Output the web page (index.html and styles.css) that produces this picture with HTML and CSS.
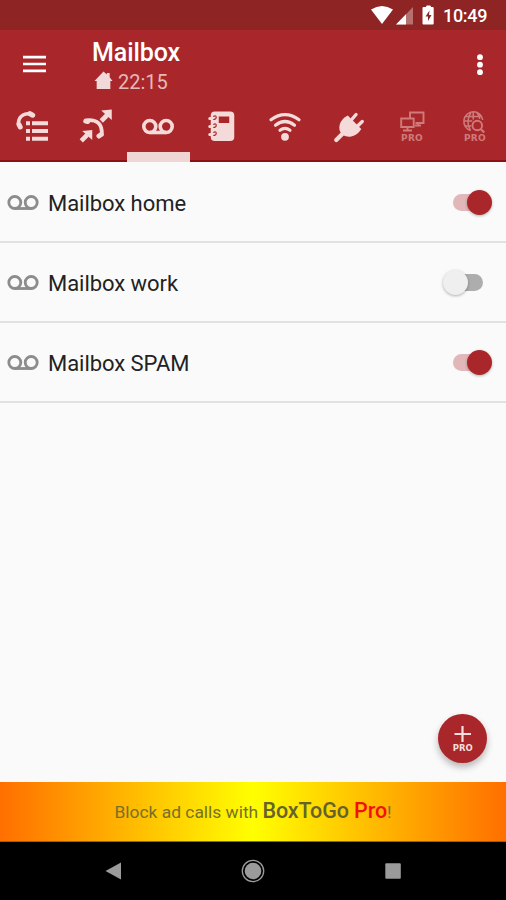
FILE: index.html
```html
<!DOCTYPE html>
<html lang="en">
<head>
<meta charset="utf-8">
<title>Mailbox</title>
<link rel="stylesheet" href="styles.css">
</head>
<body>
<svg class="defs" width="0" height="0" aria-hidden="true">
  <symbol id="voicemail" viewBox="0 0 34 18">
    <g fill="none" stroke="currentColor"><circle cx="8.800" cy="8.500" r="6"/><circle cx="25.200" cy="8.500" r="6"/><path d="M8.800 14.500h16.400"/></g>
  </symbol>
</svg>
<div class="screen">
  <header class="status">
    <svg class="status-icons" viewBox="370 0 66 30" fill="#fff">
      <path d="M371 9.5q11-7 22 0L382 24z"/>
      <path opacity=".35" d="M413 7v17.500h-17z"/><path d="M406 14.200v10.300h-10z"/>
      <path d="M424.500 7h1.500q0-1.500 1-1.500h3q1 0 1 1.500h1.700q1 0 1 1v15.500q0 1-1 1h-9.200q-1 0-1-1v-15.500q0-1 1-1z"/>
      <path fill="#8e2424" d="M429.500 10.500l-4 6h2.500v4.500l3.500-6h-2.500z"/>
    </svg>
    <span class="clock">10:49</span>
  </header>
  <div class="appbar">
    <svg class="menu" viewBox="0 0 24 18"><path d="M0 1.800h24M0 9h24M0 16.200h24" stroke="#fff" stroke-width="2.800"/></svg>
    <div class="heading">
      <h1>Mailbox</h1>
      <div class="sub"><svg viewBox="0 0 20 20"><path d="M10 .5l3.500 3.300V2h3v4.500L19.500 10.500h-2.300V19H2.800v-8.500H.500z" fill="#f2d9d9"/></svg><span>22:15</span></div>
    </div>
    <svg class="more" viewBox="0 0 8 22" fill="#fff"><circle cx="4" cy="3.200" r="2.900"/><circle cx="4" cy="10.700" r="2.900"/><circle cx="4" cy="18.200" r="2.900"/></svg>
  </div>
  <nav class="tabs">
    <div class="tab"><svg viewBox="0 98 63.25 64" fill="none" stroke="currentColor">
      <path stroke-width="3.600" d="M18.500 124.500Q18 113.500 31 113.500"/>
      <path stroke-width="5" stroke-linecap="round" d="M19 124.500l1.200 2.500M30 113.700l2.700 1.500"/>
      <path stroke-width="4" d="M26 123.200h4M32 123.200h16M26 131h4M32 131h16M26 138.800h4M32 138.800h16"/></svg></div>
    <div class="tab"><svg viewBox="63.25 98 63.25 64" fill="none" stroke="currentColor">
      <path stroke-width="3.800" d="M87 120.300Q103 119 102 134.500"/>
      <path stroke-width="5" stroke-linecap="round" d="M86 121l2 .5M101.500 134.500l-2.300 1.500"/>
      <path stroke-width="4.600" d="M101.500 121l6-6M81.500 140.800l6-6"/>
      <path fill="currentColor" stroke="none" d="M112 109.500v10.500l-10.500-9.500zM92.500 130v10l-10-9z"/></svg></div>
    <div class="tab active"><svg class="vm" viewBox="0 0 34 18"><use href="#voicemail"/></svg></div>
    <div class="tab"><svg viewBox="189.75 98 63.25 64">
      <rect x="210.500" y="111.500" width="23.500" height="29.500" rx="4" fill="currentColor"/>
      <rect x="218.500" y="116.500" width="10.500" height="6.500" fill="#a9272a"/>
      <path d="M209.500 118.500h4M209.500 126.500h4M209.500 134.500h4" stroke="currentColor" stroke-width="3" stroke-linecap="round"/>
      <path d="M213 116.500q3-1.500 3 .7t-3 2.300M213 124.500q3-1.500 3 .7t-3 2.300M213 132.500q3-1.500 3 .7t-3 2.300" fill="none" stroke="#a9272a" stroke-width="1.100"/></svg></div>
    <div class="tab"><svg viewBox="253 98 63.25 64" fill="none" stroke="currentColor" stroke-width="3.200" stroke-linecap="round">
      <circle cx="285" cy="136.800" r="3.900" fill="currentColor" stroke="none"/>
      <path d="M271 119.800Q285 109.500 299 119.800M275.500 125.300Q285 117.700 294.500 125.300M280 130.300Q285 126.500 290 130.300"/></svg></div>
    <div class="tab"><svg viewBox="316.25 98 63.25 64" fill="none" stroke="currentColor" stroke-linecap="round">
      <path stroke-width="4.200" d="M336.500 140l6.500-6.500"/>
      <path stroke-width="3.400" d="M352 119.500l4.300-5M357.800 126l4.700-4.500"/>
      <path fill="currentColor" stroke="none" d="M348 115.500l13.500 13.500q-3.500 6-10 7.500-6 1-9.500-2.500-3.500-4-2-9.500 1.800-6 8-9z"/></svg></div>
    <div class="tab pro"><svg viewBox="379.50 98 63.25 64" fill="none" stroke="currentColor" stroke-width="1.900">
      <path d="M409.500 117.500v-5h13.500v10.500h-8M400.700 118.500h12.500v8.500h-12.500zM407 127v3.500M402.500 130.500h9M417.500 123v3M414.500 125.500h6"/>
      <text x="411.500" y="141">PRO</text></svg></div>
    <div class="tab pro"><svg viewBox="442.75 98 63.25 64" fill="none" stroke="currentColor" stroke-width="1.500">
      <path d="M470.500 130.500A9.500 9.500 0 1 1 482.500 120M464 121h8M465 116.500h16M465 126h6M470 130Q465 121 471 112M476 112q3 3 3.500 7M473 111.500v8"/>
      <circle cx="477" cy="125.500" r="4.800" stroke-width="1.900"/><path stroke-width="2.200" d="M480.500 129l3.500 3.500"/>
      <text x="474.700" y="141">PRO</text></svg></div>
  </nav>
  <main>
    <div class="row"><svg class="vm" viewBox="0 0 34 18"><use href="#voicemail"/></svg><span>Mailbox home</span><i class="switch on"></i></div>
    <div class="row"><svg class="vm" viewBox="0 0 34 18"><use href="#voicemail"/></svg><span>Mailbox work</span><i class="switch"></i></div>
    <div class="row"><svg class="vm" viewBox="0 0 34 18"><use href="#voicemail"/></svg><span>Mailbox SPAM</span><i class="switch on"></i></div>
    <button class="fab"><svg viewBox="0 0 49 49"><path d="M24.500 12v16M16.500 20h16.500" stroke="#f6dede" stroke-width="2.200"/><text x="24.700" y="37">PRO</text></svg></button>
  </main>
  <div class="banner"><p>Block ad calls with <b>BoxToGo <em>Pro</em></b>!</p></div>
  <footer class="navbar">
    <svg viewBox="0 0 24 24"><path d="M4.500 12L20 3.500v17z" fill="#9b9b9b"/></svg>
    <svg viewBox="0 0 24 24"><circle cx="12" cy="12" r="8.300" fill="#9b9b9b"/><circle cx="12" cy="12" r="10.700" fill="none" stroke="#9b9b9b" stroke-width="1.300"/></svg>
    <svg viewBox="0 0 24 24"><rect x="4.300" y="4.300" width="15.500" height="15.500" rx="1" fill="#9b9b9b"/></svg>
  </footer>
</div>
</body>
</html>
```
FILE: styles.css
```css
* { box-sizing: border-box; }
body { margin: 0; font-family: Roboto, "Liberation Sans", sans-serif; }
svg { display: block; flex: none; }
.defs { display: none; }
.screen { width: 506px; height: 900px; display: flex; flex-direction: column; background: #fafafa; overflow: hidden; }
.status { height: 30px; background: #8e2424; display: flex; align-items: center; justify-content: flex-end; gap: 7px; padding-right: 19px; }
.status-icons { width: 66px; height: 30px; }
.clock { width: 44px; color: #fff; font-size: 18px; line-height: 30px; font-weight: 500; padding-top: 2px; letter-spacing: -.3px; white-space: nowrap; }
.appbar { height: 68px; background: #a9272a; display: flex; align-items: flex-start; padding: 0 22px 0 23px; }
.menu { width: 23px; height: 18px; margin-top: 25px; }
.heading { margin-left: 46px; flex: 1; }
h1 { margin: 9px 0 0; color: #fff; font-size: 25px; line-height: 28px; font-weight: 500; letter-spacing: -.1px; }
.sub { display: flex; align-items: center; gap: 5px; margin: 3px 0 0 2px; color: #e5b9b9; font-size: 20px; line-height: 24px; }
.sub svg { width: 19px; height: 19px; margin-top: -3px; }
.more { width: 8px; height: 22px; margin-top: 24px; }
.tabs { height: 64px; background: #a9272a; display: grid; grid-template-columns: repeat(8, 1fr); color: #f5dada; border-bottom: 2px solid #8b1014; }
.tab { height: 64px; min-width: 0; }
.tab > svg { width: 63.25px; height: 64px; }
.tab.active { border-bottom: 10px solid #f0d5d5; }
.tab .vm { width: 34px; height: 18px; margin: 20px auto 0; stroke-width: 3.6px; }
.tab.pro { color: #cf7b7b; }
.pro text { font: 700 9px "DejaVu Sans", sans-serif; fill: currentColor; stroke: none; text-anchor: middle; letter-spacing: .2px; }
main { position: relative; flex: 1; padding-top: 1px; }
.row { height: 80px; padding: 1px 12px 0 6px; display: flex; align-items: center; border-bottom: 2px solid #e1e1e1; color: #222; }
.row .vm { width: 34px; height: 18px; color: #8c8c8c; stroke-width: 2.8px; }
.row span { flex: 1; margin-left: 8px; font-size: 22px; line-height: 30px; padding-top: 2px; letter-spacing: -.04px; }
.switch { position: relative; width: 51px; height: 26px; }
.switch::before { content: ""; position: absolute; left: 8px; top: 4px; width: 32px; height: 17px; border-radius: 9px; background: #adadad; }
.switch::after { content: ""; position: absolute; left: 0; top: 0; width: 25px; height: 25px; border-radius: 50%; background: #efefef; box-shadow: 0 1px 3px rgba(0, 0, 0, .3); }
.switch.on::before { left: 10px; background: #e2b7b9; }
.switch.on::after { left: 24px; background: #a9272a; }
.fab { position: absolute; right: 19px; bottom: 19px; width: 49px; height: 49px; padding: 0; border: 0; border-radius: 50%; background: #a9272a; box-shadow: 0 4px 7px rgba(0, 0, 0, .28); }
.fab svg { width: 49px; height: 49px; }
.fab text { font: 700 8.5px "DejaVu Sans", sans-serif; fill: #f6dede; text-anchor: middle; }
.banner { height: 60px; border-bottom: 1px solid #8a6b00; background: linear-gradient(90deg, #ff6f00, #ff0 50%, #ff6f00); display: flex; align-items: center; justify-content: center; }
.banner p { margin: 0; color: #77702a; font-size: 17.4px; line-height: 28px; white-space: nowrap; }
.banner b { font-size: 21.5px; font-weight: 500; color: #66622d; letter-spacing: -.1px; }
.banner em { font-style: normal; color: #f01010; }
.navbar { height: 58px; background: #000; display: flex; justify-content: space-between; align-items: center; padding: 0 101px; }
.navbar svg { width: 24px; height: 24px; }
```
